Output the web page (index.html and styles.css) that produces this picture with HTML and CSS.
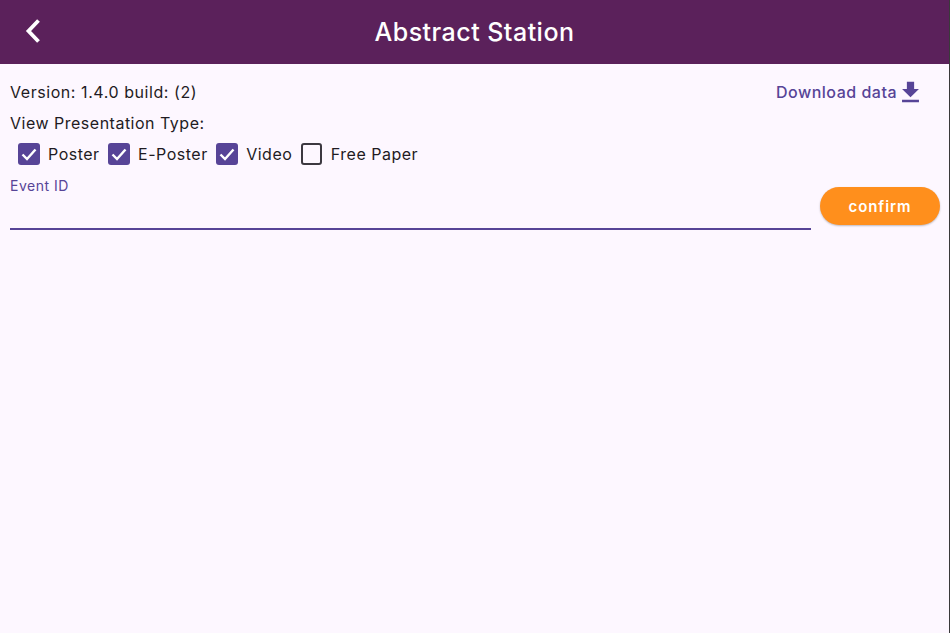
FILE: index.html
```html
<!DOCTYPE html>
<html lang="en">
<head>
    <meta charset="UTF-8">
    <meta name="viewport" content="width=device-width, initial-scale=1.0">
    <title>Abstract Station</title>
    <link rel="stylesheet" href="styles.css">
</head>
<body>
<header class="app-bar">
    <button class="back-btn" aria-label="Back">
        <svg width="18" height="26" viewBox="0 0 18 26"><path d="M14.5 2.5 L4.5 13 L14.5 23.5" fill="none" stroke="#fff" stroke-width="3.8"/></svg>
    </button>
    <h1>Abstract Station</h1>
</header>
<main class="content">
    <div class="top-row">
        <div class="version">Version: 1.4.0 build: (2)</div>
        <a class="download">
            Download data
            <svg width="29" height="29" viewBox="0 0 24 24"><path d="M19 9h-4V3H9v6H5l7 7 7-7zM5 18v2h14v-2H5z" fill="#574497"/></svg>
        </a>
    </div>
    <div class="view-label">View Presentation Type:</div>
    <div class="checks">
        <label class="check">
            <span class="box on"><svg width="22" height="22" viewBox="0 0 22 22"><path d="M4.5 11.5 L9 16 L17.5 6.5" fill="none" stroke="#fff" stroke-width="2.4"/></svg></span>
            Poster
        </label>
        <label class="check">
            <span class="box on"><svg width="22" height="22" viewBox="0 0 22 22"><path d="M4.5 11.5 L9 16 L17.5 6.5" fill="none" stroke="#fff" stroke-width="2.4"/></svg></span>
            E-Poster
        </label>
        <label class="check">
            <span class="box on"><svg width="22" height="22" viewBox="0 0 22 22"><path d="M4.5 11.5 L9 16 L17.5 6.5" fill="none" stroke="#fff" stroke-width="2.4"/></svg></span>
            Video
        </label>
        <label class="check">
            <span class="box"></span>
            Free Paper
        </label>
    </div>
    <div class="event-row">
        <div class="field">
            <label>Event ID</label>
        </div>
        <button class="confirm">confirm</button>
    </div>
</main>
</body>
</html>
```

FILE: styles.css
```css
body {
    margin: 0;
    height: 633px;
    overflow: hidden;
    font-family: 'Inter', 'Roboto', sans-serif;
    background: #fdf7ff;
    color: #1f1b23;
    border-right: 1px solid #3a3a3a;
    box-sizing: border-box;
}

.app-bar {
    position: relative;
    height: 64px;
    background: #5b215b;
    display: flex;
    align-items: center;
    justify-content: center;
    color: #fff;
}

.app-bar h1 {
    margin: 0;
    font-size: 25px;
    font-weight: 500;
    letter-spacing: 0.47px;
}

.back-btn {
    position: absolute;
    left: 24px;
    top: 18px;
    padding: 0;
    border: 0;
    background: none;
    display: flex;
}

.content {
    padding: 16px 9px 0 10px;
    font-size: 16px;
    letter-spacing: 0.5px;
}

.top-row {
    display: flex;
    justify-content: space-between;
    align-items: center;
    height: 24px;
    padding-right: 15px;
}

.version {
    letter-spacing: 0.56px;
}

.download {
    display: flex;
    align-items: center;
    color: #574497;
    font-weight: 500;
}

.download svg {
    margin-left: -1px;
}

.view-label {
    margin-top: 8px;
    line-height: 22px;
}

.checks {
    display: flex;
    margin-top: 8px;
    padding-left: 8px;
    gap: 8.5px;
}

.check {
    display: flex;
    align-items: center;
    gap: 8.5px;
    height: 24px;
}

.box {
    width: 21.5px;
    height: 21.5px;
    box-sizing: border-box;
    border: 2px solid #3c3840;
    border-radius: 3px;
    display: block;
}

.box.on {
    background: #574497;
    border: 0;
}

.box svg {
    display: block;
}

.event-row {
    display: flex;
    align-items: flex-end;
    gap: 9px;
    margin-top: 11px;
}

.field {
    flex: none;
    width: 801px;
    height: 53px;
    box-sizing: border-box;
    border-bottom: 2px solid #574497;
}

.field label {
    display: block;
    font-size: 14px;
    line-height: 18px;
    color: #574497;
}

.confirm {
    flex: none;
    width: 120px;
    height: 38px;
    margin-bottom: 5px;
    border: 0;
    border-radius: 19px;
    background: #ff8f1c;
    color: #fff;
    font-family: inherit;
    font-size: 15px;
    font-weight: 600;
    letter-spacing: 0.9px;
    box-shadow: 0 1px 2px rgba(0, 0, 0, 0.25);
}
```
